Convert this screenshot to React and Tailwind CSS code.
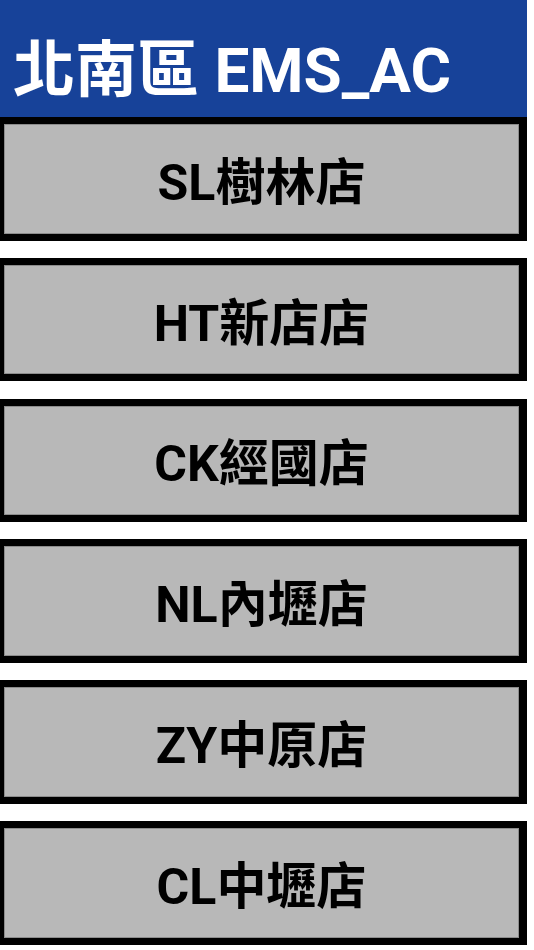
import React from "react";

const stores = ["SL樹林店", "HT新店店", "CK經國店", "NL內壢店", "ZY中原店", "CL中壢店"];

export default function App() {
  return (
    <div
      className="w-[534px] h-[950px] bg-white overflow-hidden"
      style={{ fontFamily: "Roboto, 'Noto Sans CJK TC', sans-serif" }}
    >
      <div className="w-[527px]">
        <div className="h-[117px] bg-[#174299] pl-[13px] pt-[40px]">
          <div className="text-white font-bold text-[62px] leading-[62px] whitespace-nowrap">北南區 EMS_AC</div>
        </div>
        <div className="flex flex-col gap-[17.2px]">
          {stores.map((s) => (
            <div key={s} className="h-[123.6px] bg-black pl-[4px] pr-[8px] py-[7px] flex">
              <div className="flex-1 bg-[#b8b8b8] border border-[#8c8c8c] flex items-center justify-center pt-[8px]">
                <span className="text-black font-bold text-[50px] leading-[50px] whitespace-nowrap">{s}</span>
              </div>
            </div>
          ))}
        </div>
      </div>
    </div>
  );
}
